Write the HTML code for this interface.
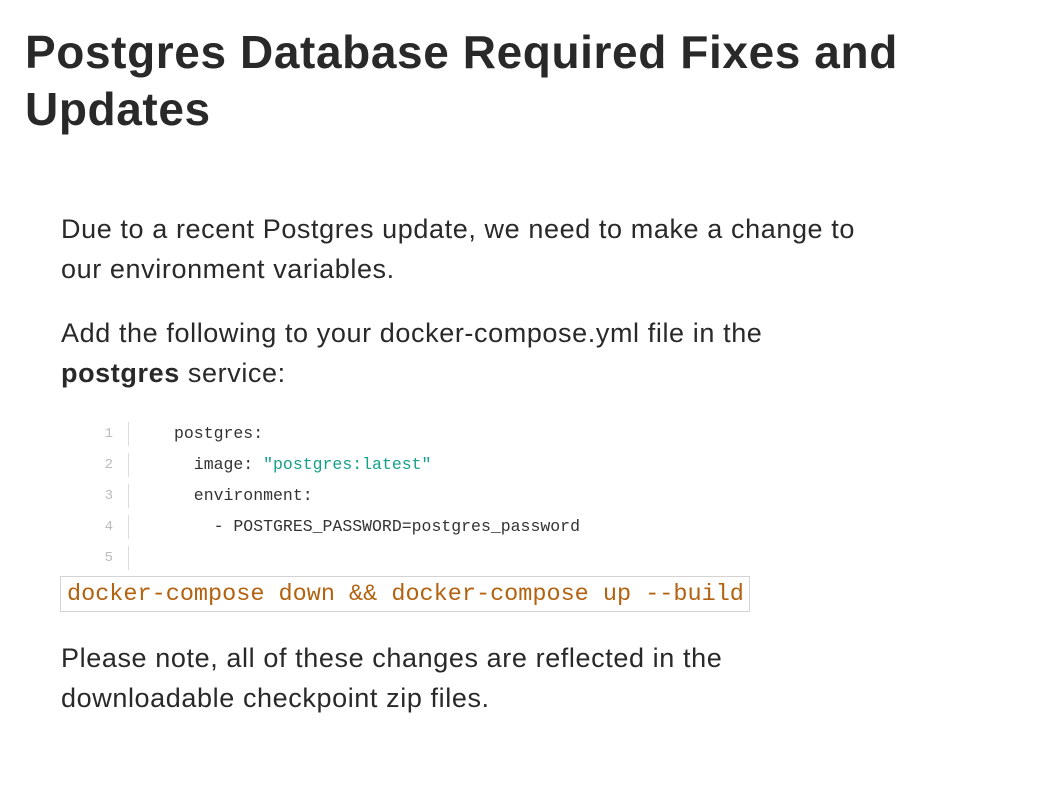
<!DOCTYPE html>
<html><head><meta charset="utf-8"><style>
body{margin:0;background:#fff;color:#292929;font-family:"Liberation Sans",sans-serif;width:1050px;height:808px;overflow:hidden;position:relative}
h1{position:absolute;left:25px;top:24px;margin:0;font-size:46px;line-height:57px;font-weight:bold;width:1000px;letter-spacing:0.6px}
.p{position:absolute;left:61px;margin:0;font-size:27px;line-height:40px;letter-spacing:0.6px}
.code{position:absolute;left:61px;top:420px;font-family:"Liberation Mono",monospace;font-size:16.5px}
.ln{position:absolute;width:52px;text-align:right;color:#bbb;font-size:14px}
.bar{position:absolute;left:67px;width:1px;height:24px;background:#ddd}
.t{position:absolute;left:113px;white-space:pre;color:#333}
.inl{position:absolute;left:60px;top:576px;width:690px;height:36px;border:1px solid #d4d4d4;font-family:"Liberation Mono",monospace;font-size:23.5px;color:#b3620f;line-height:36px;white-space:pre;padding-left:6px;box-sizing:border-box}
</style></head><body>
<h1>Postgres Database Required Fixes and Updates</h1>
<p class="p" style="top:209px">Due to a recent Postgres update, we need to make a change to<br>our environment variables.</p>
<p class="p" style="top:313px">Add the following to your docker-compose.yml file in the<br><b>postgres</b> service:</p>
<div class="code">
<div class="ln" style="top:6px;left:0">1</div><div class="bar" style="top:2px"></div><div class="t" style="top:4px">postgres:</div>
<div class="ln" style="top:37px;left:0">2</div><div class="bar" style="top:33px"></div><div class="t" style="top:35px">  image: <span style="color:#16a08a">"postgres:latest"</span></div>
<div class="ln" style="top:68px;left:0">3</div><div class="bar" style="top:64px"></div><div class="t" style="top:66px">  environment:</div>
<div class="ln" style="top:99px;left:0">4</div><div class="bar" style="top:95px"></div><div class="t" style="top:97px">    - POSTGRES_PASSWORD=postgres_password</div>
<div class="ln" style="top:130px;left:0">5</div><div class="bar" style="top:126px"></div>
</div>
<div class="inl">docker-compose down &amp;&amp; docker-compose up --build</div>
<p class="p" style="top:638px">Please note, all of these changes are reflected in the<br>downloadable checkpoint zip files.</p>
</body></html>
